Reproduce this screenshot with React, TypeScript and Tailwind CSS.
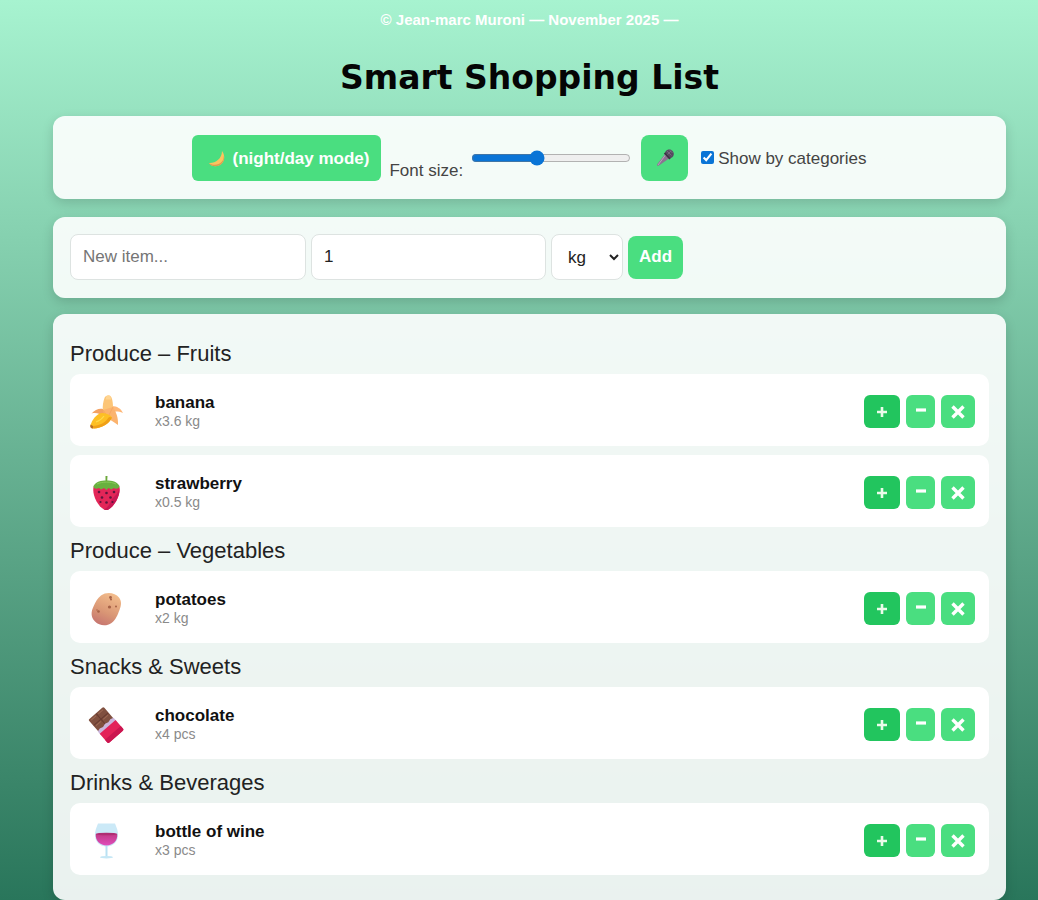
import { useState, type ReactNode } from "react";

type Item = { id: string; name: string; qty: number; unit: string; icon: ReactNode };
type Category = { title: string; items: Item[] };

function Banana() {
  return (
    <svg viewBox="0 0 36 36" className="size-9" aria-hidden="true">
      <path d="M15 15c-4-1-8 .8-11.500 4.500 3-.8 5.500-.5 8 .5l8 2z" fill="#f3a263" />
      <path d="M24 12c5 .2 9 2.500 11 7-2.600-1.300-4.600-1.500-7-1.500l-6 1z" fill="#ffb878" />
      <path d="M15 17c-.8-5 .3-9.500 1.500-13 .8-3 5.500-3.500 7-.5 1.300 3.500 1.500 7 1.500 10l-1 7z" fill="#fcc577" />
      <path d="M18.500 2c1-1 3-1 4 0l.5 3.500h-5.500z" fill="#ffd592" />
      <path d="M15 16l10-3c3 5 5.500 10.500 5 18-4.500-3-8-5.500-13-8z" fill="#fbb36e" />
      <path d="M15 16l5 7 5-10" stroke="#f4a55e" strokeWidth=".8" fill="none" />
      <path d="M14 19c4 0 8 1.500 10 4.500-3 6.500-10 10.500-18.500 11-2 .5-3.500-1-3-3C4 26 8 20 14 19z" fill="#fdbf24" />
      <path d="M4.500 32c7-.3 12.500-3 16.500-9l3 .5c-3 6.500-10 10.500-18.500 11z" fill="#f0a017" />
      <path d="M2.500 30.500l2.500 1.500v2.500c-2 0-3.300-1.500-2.500-4z" fill="#b66d27" />
      <path d="M8 28c3-1 6-3 8-6" stroke="#ffda4a" strokeWidth="1.200" fill="none" />
    </svg>
  );
}

function Strawberry() {
  return (
    <svg viewBox="0 0 36 36" className="size-9" aria-hidden="true">
      <path d="M5.500 12c1-5 25-5 26 0 1.500 8-5 19-11 22.500-1.500.8-3 .8-4.500 0C9.500 31 4 20 5.500 12z" fill="#e32658" />
      <path d="M24 24c3-3 6-6 7.500-10 0 8-5 17-11 20.500-1.500.8-3 .8-4.500 0 4-2 6-6 8-10.500z" fill="#c91854" />
      <path d="M5.500 11C8 6.500 13 5.500 18.500 5.500S29 6.500 31.500 11c-.5 2.500-3 3.500-6 2l-2 1.500-3-1.500-2 2-2.500-2-3 1.500-2-1.500c-3 1.500-5.500.5-5.500-2z" fill="#68b13f" />
      <path d="M17.500 1h2l-.3 6h-1.700z" fill="#6ca83b" />
      <path d="M9 9c5-2.500 14-2.500 19 0" stroke="#87c958" fill="none" />
      <g fill="#5c163d">
        <circle cx="11" cy="17" r="1.300" /><circle cx="18.500" cy="18" r="1.300" /><circle cx="26" cy="17" r="1.300" />
        <circle cx="14" cy="22.500" r="1.300" /><circle cx="22.500" cy="22.500" r="1.300" />
        <circle cx="18.500" cy="27.500" r="1.300" /><circle cx="12.500" cy="27" r="1.100" /><circle cx="24.500" cy="27" r="1.100" />
      </g>
    </svg>
  );
}

function Potato() {
  return (
    <svg viewBox="0 0 36 36" className="size-9" aria-hidden="true">
      <defs>
        <linearGradient id="potato" x1=".7" y1="0" x2=".3" y2="1">
          <stop offset="0" stopColor="#f3bd8c" />
          <stop offset=".6" stopColor="#d99675" />
          <stop offset="1" stopColor="#c67570" />
        </linearGradient>
      </defs>
      <path d="M13 4.500c5.500-4 14-3 18 2 3 4 2.300 8 .5 12.500-2 5-3.500 9.500-8 13-5 3.500-12 3-16.500-1.500C2.500 26 3 20.500 5.500 15.500 7.500 11 9.500 7 13 4.500z" fill="url(#potato)" />
      <g fill="#a66146">
        <circle cx="22.500" cy="6.500" r="1.400" /><circle cx="23" cy="8.500" r="1" />
        <circle cx="21.500" cy="16" r="1.600" /><circle cx="28" cy="15.500" r="1" />
        <circle cx="10.500" cy="20.500" r="1.300" /><circle cx="9" cy="19" r=".7" />
      </g>
    </svg>
  );
}

function Chocolate() {
  return (
    <svg viewBox="0 0 36 36" className="size-9" aria-hidden="true">
      <g transform="rotate(-41 18 18)">
        <rect x="8" y="2.500" width="20" height="16" rx="1.500" fill="#80503f" />
        <path d="M18 3v15M8.500 10.300h19" stroke="#673b30" strokeWidth="1" />
        <path d="M10 4.500h6.500M19.500 4.500H26M10 12h6.500M19.500 12H26" stroke="#9b6853" strokeWidth="1" />
        <path d="M7.500 17.500l3.500-1 3.500 1 3.500-1 3.500 1 3.500-1 3.500 1v5h-21z" fill="#cab6dc" />
        <path d="M7.500 20.500h21v11.500c0 1-1 1.500-2 1.500h-17c-1 0-2-.5-2-1.500z" fill="#e32259" />
        <path d="M7.500 28.500h21V32c0 1-1 1.500-2 1.500h-17c-1 0-2-.5-2-1.500z" fill="#cb1650" />
      </g>
    </svg>
  );
}

function Wine() {
  return (
    <svg viewBox="0 0 36 36" className="size-9" aria-hidden="true">
      <defs>
        <linearGradient id="wine" x1="0" y1="0" x2="0" y2="1">
          <stop offset="0" stopColor="#c13a86" />
          <stop offset="1" stopColor="#e04dbb" />
        </linearGradient>
      </defs>
      <path d="M10 .500h17c1.500 4 3.500 8 3 12.500C29.500 19 25 23.500 18.500 23.500S7.500 19 7 13c-.5-4.500 1.500-8.500 3-12.500z" fill="#cbe9f7" />
      <path d="M7.800 11h21.400c.8 6.500-4.200 11.500-10.700 11.500S7 17.500 7.800 11z" fill="url(#wine)" />
      <ellipse cx="18.500" cy="11" rx="10.700" ry="1.300" fill="#af2e73" />
      <path d="M17.500 23h2v11h-2z" fill="#b9e1f2" />
      <ellipse cx="18.500" cy="34.200" rx="6.500" ry="1.300" fill="#c5e7f5" />
    </svg>
  );
}

function Moon() {
  return (
    <svg viewBox="0 0 18 18" className="size-[18px]" aria-hidden="true">
      <path d="M14 1c4 5.500 2.500 12-3 14.500C7 17.300 3 16 1 13c6 .5 13-4 13-12z" fill="#fbc45f" />
      <path d="M15.500 5c1 6-3.500 10-9 9.800-2 0-4-.8-5.500-1.800 2 3 6 4.300 10 2.500 4-1.800 6-6 4.500-10.500z" fill="#dc9c50" />
    </svg>
  );
}

function Microphone() {
  return (
    <svg viewBox="0 0 20 20" className="size-5" aria-hidden="true">
      <path d="M10 6l4 4.500L4 17.500l-1.500.5L2 16.500z" fill="#8c7391" />
      <path d="M10.500 7L3 17" stroke="#b9a2bc" strokeWidth="1" />
      <path d="M10.500 3.500c2-2.500 5-2.500 7-.5s1.500 5-.5 6.500l-2.500 1-5-5z" fill="#564a60" />
      <path d="M9.500 5l5.500 6" stroke="#3c3344" strokeWidth="1.800" />
      <path d="M12 3l4.500 4.500M14.500 2l3 3M12.500 6.500l4-4" stroke="#81758a" strokeWidth=".7" />
    </svg>
  );
}

const categories: Category[] = [
  {
    title: "Produce – Fruits",
    items: [
      { id: "banana", name: "banana", qty: 3.6, unit: "kg", icon: <Banana /> },
      { id: "strawberry", name: "strawberry", qty: 0.5, unit: "kg", icon: <Strawberry /> },
    ],
  },
  { title: "Produce – Vegetables", items: [{ id: "potatoes", name: "potatoes", qty: 2, unit: "kg", icon: <Potato /> }] },
  { title: "Snacks & Sweets", items: [{ id: "chocolate", name: "chocolate", qty: 4, unit: "pcs", icon: <Chocolate /> }] },
  { title: "Drinks & Beverages", items: [{ id: "wine", name: "bottle of wine", qty: 3, unit: "pcs", icon: <Wine /> }] },
];

const card = "rounded-xl bg-white/90 px-[17px] shadow-[0_4px_12px_rgba(0,0,0,0.15)]";
const field = "h-[46px] rounded-lg border border-[#dde3e1] bg-white px-3 text-[17px] text-[#222]";

function ItemRow({ item }: { item: Item }) {
  return (
    <li className="flex h-[72px] items-center rounded-[10px] bg-white pr-3.5 pl-[18px]">
      <span className="mt-1 shrink-0">{item.icon}</span>
      <div className="ml-[31px] grow pt-0.5">
        <p className="text-[17px] leading-[19px] font-bold text-[#111]">{item.name}</p>
        <p className="text-[14px] leading-[18px] text-[#8a8a8a]">x{item.qty} {item.unit}</p>
      </div>
      <div className="flex gap-1.5 pt-0.5">
        <button type="button" aria-label={`Add one ${item.name}`} className="flex h-[33px] w-9 items-center justify-center rounded-md bg-[#22c55e]">
          <svg viewBox="0 0 10 10" className="mt-0.5 size-2.5" aria-hidden="true"><path d="M5 0v10M0 5h10" stroke="#eafbea" strokeWidth="2.600" /></svg>
        </button>
        <button type="button" aria-label={`Remove one ${item.name}`} className="flex h-[33px] w-[29px] items-center justify-center rounded-md bg-[#4ade80]">
          <svg viewBox="0 0 10 4" className="mb-0.5 h-1 w-2.5" aria-hidden="true"><path d="M0 2h10" stroke="#fff" strokeWidth="3.200" /></svg>
        </button>
        <button type="button" aria-label={`Delete ${item.name}`} className="flex h-[33px] w-[34px] items-center justify-center rounded-md bg-[#4ade80]">
          <svg viewBox="0 0 14 14" className="mt-0.5 size-3.5" aria-hidden="true"><path d="M1.500 1.500l11 11M12.500 1.500l-11 11" stroke="#fff" strokeWidth="3.400" /></svg>
        </button>
      </div>
    </li>
  );
}

export default function App() {
  const [size, setSize] = useState(16);
  const [grouped, setGrouped] = useState(true);

  return (
    <div className="min-h-screen bg-linear-to-b from-[#a7f3d0] to-[#065f46] to-120% pr-8 pl-[53px] font-['Liberation_Sans',Arial,sans-serif]">
      <p className="pt-2.5 text-center text-[15px] leading-5 font-bold text-white">© Jean-marc Muroni — November 2025 —</p>
      <h1 className="pt-7 pb-[18px] text-center font-['DejaVu_Sans',sans-serif] text-[33px] leading-10 font-bold text-[#050505]">Smart Shopping List</h1>

      <main className="flex flex-col gap-4">
        <section className={`${card} mb-0.5 flex items-center justify-center pt-[19px] pb-[18px] text-[17px] leading-5 text-[#444]`}>
          <button type="button" className="flex h-[46px] items-center gap-1.5 rounded-md bg-[#4ade80] pt-0.5 pr-3 pl-4 font-bold text-white">
            <Moon />
            (night/day mode)
          </button>
          <label htmlFor="font-size" className="ml-2 self-end">Font size:</label>
          <input id="font-size" type="range" min={12} max={22} value={size} onChange={(e) => setSize(Number(e.target.value))} className="ml-2 w-40 accent-[#0a74d6]" />
          <button type="button" aria-label="Voice input" className="ml-2.5 flex h-[46px] w-[47px] items-center justify-center rounded-lg bg-[#4ade80]">
            <Microphone />
          </button>
          <label className="ml-[13px] flex items-center gap-1 pt-0.5">
            <input type="checkbox" checked={grouped} onChange={(e) => setGrouped(e.target.checked)} className="mb-1 size-[13px] accent-[#0a74d6]" />
            Show by categories
          </label>
        </section>

        <section className={`${card} flex items-center gap-[5px] pt-[17px] pb-[18px]`}>
          <input type="text" aria-label="New item" placeholder="New item..." className={`${field} w-[236px] placeholder:text-[#757575]`} />
          <input type="text" inputMode="decimal" aria-label="Quantity" defaultValue="1" className={`${field} w-[235px]`} />
          <select aria-label="Unit" defaultValue="kg" className={`${field} w-[72px] pr-0`}>
            <option>kg</option>
            <option>pcs</option>
          </select>
          <button type="button" className="h-[43px] rounded-lg bg-[#4ade80] px-[11px] text-[17px] font-bold text-white">Add</button>
        </section>

        <section className={`${card} pt-4 pb-[25px]`}>
          {categories.map((c) => (
            <div key={c.title}>
              <h2 className="pt-3 pb-2 text-[22px] leading-6 text-[#222]">{c.title}</h2>
              <ul className="flex flex-col gap-[9px]">
                {c.items.map((item) => <ItemRow key={item.id} item={item} />)}
              </ul>
            </div>
          ))}
        </section>
      </main>
    </div>
  );
}
